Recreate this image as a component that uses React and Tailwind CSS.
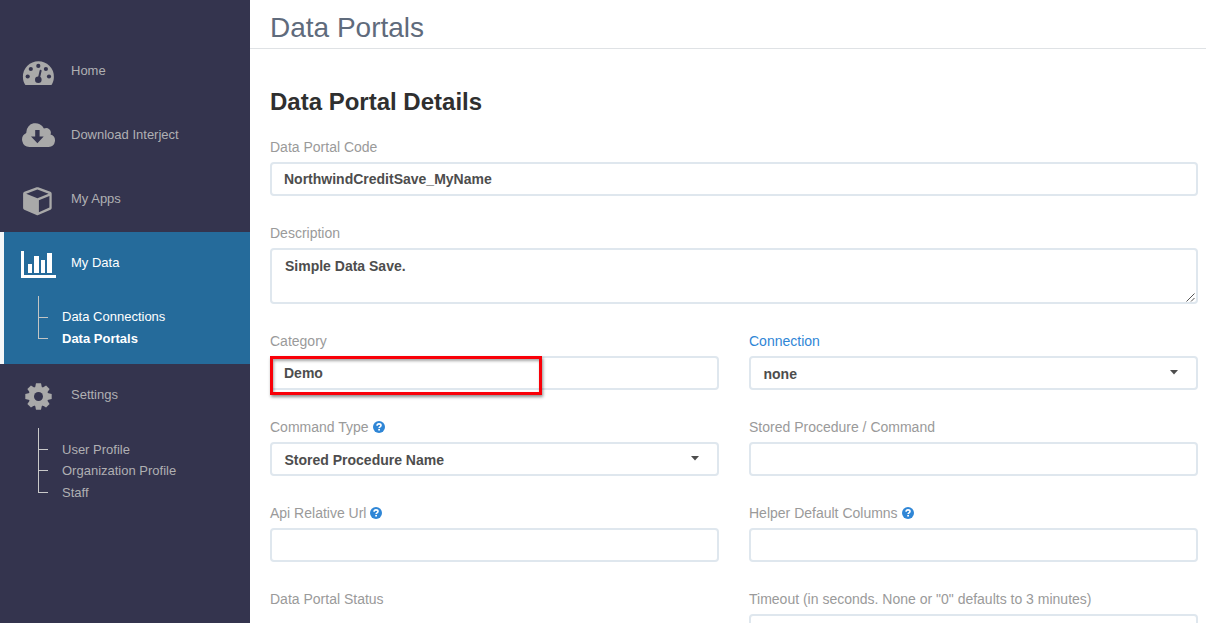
import React from "react";

const GaugeIcon = () => (
  <svg width="33" height="26" viewBox="22 60 33 26" className="block">
    <path fill="#a9a9a9" d="M38.4 61.2A15.5 15.5 0 0 0 22.9 76.7c0 3 .8 5.5 2.1 7.7.3.5.6.7 1.2.7h24.4c.6 0 .9-.2 1.2-.7 1.3-2.2 2.1-4.7 2.1-7.7A15.5 15.5 0 0 0 38.4 61.2z" />
    <g fill="#34344e">
      <circle cx="38.3" cy="65.9" r="2.1" />
      <circle cx="30.8" cy="69" r="2.1" />
      <circle cx="45.9" cy="69" r="2.1" />
      <circle cx="27.7" cy="76.5" r="2.1" />
      <circle cx="49" cy="76.5" r="2.1" />
      <circle cx="38.3" cy="79.8" r="3.3" />
    </g>
    <path d="M38.6 79.5l2-8.7" stroke="#34344e" strokeWidth="2" strokeLinecap="round" />
  </svg>
);

const CloudIcon = () => (
  <svg width="33" height="25" viewBox="22 123 33 25" className="block">
    <path fill="#a9a9a9" d="M29.5 147a7.3 7.3 0 0 1-3.2-13.9v-.9a9.2 9.2 0 0 1 17.6-3.6 4.7 4.7 0 0 1 6.6 5.9A6.4 6.4 0 0 1 48.6 147z" />
    <path fill="#34344e" d="M35.2 130h4.4v6.5h4.1l-6.3 6.7-6.4-6.7h4.2z" />
  </svg>
);

const CubeIcon = () => (
  <svg width="31" height="30" viewBox="22 186 31 30" className="block">
    <path fill="#a9a9a9" fillRule="evenodd" d="M36.600 187.300q.8-.3 1.600 0l12.200 4.500q1.300.5 1.300 1.900v14.200q0 1.300-1.200 1.800l-12.200 5.300q-.9.400-1.800 0l-12.200-5.300q-1.200-.5-1.200-1.800v-14.200q0-1.400 1.300-1.900zM37.400 189.400l-11.200 4.300 11.200 4.500 11.200-4.500zM38.900 200.300v12l10.500-4.700v-11.500z" />
  </svg>
);

const ChartIcon = () => (
  <svg width="35" height="27" viewBox="0 0 35 27" shapeRendering="crispEdges" fill="#fff" className="block">
    <path d="M0 0h3v24h32v3H0zM7 13h4v9H7zM13 5h5v17h-5zM20 9h4v13h-4zM26 2h5v20h-5z" />
  </svg>
);

const GearIcon = () => (
  <svg width="27" height="27" viewBox="-13.500 -13.500 27 27" className="block">
    <g fill="#a9a9a9">
      <circle r="10" />
      <path id="tooth" d="M-3.400-9L-2.500-13.200H2.500L3.400-9V9L2.500 13.200H-2.500L-3.400 9z" />
      <use href="#tooth" transform="rotate(45)" />
      <use href="#tooth" transform="rotate(90)" />
      <use href="#tooth" transform="rotate(135)" />
    </g>
    <circle r="4.500" fill="#34344e" />
  </svg>
);

const HelpIcon = () => (
  <svg width="12" height="12" viewBox="0 0 12 12" className="-mt-px ml-[4px] block">
    <circle cx="6" cy="6" r="6" fill="#2f86d6" />
    <path d="M4.100 4.700C4.100 3.500 4.900 2.900 6 2.900s2 .6 2 1.600c0 1.300-1.900 1.300-1.900 2.600" fill="none" stroke="#fff" strokeWidth="1.600" />
    <rect x="5.200" y="7.900" width="1.800" height="1.600" fill="#fff" />
  </svg>
);

const NavItem = ({ icon, label, pad, active }) => (
  <div className="flex h-16 items-start">
    <div className={"w-[71px] shrink-0 " + pad}>{icon}</div>
    <span className={"pt-[21px] text-[13px] leading-[20px] " + (active ? "text-white" : "text-[#b0b0b3]")}>{label}</span>
  </div>
);

const Field = ({ label, help, link, value, select, textarea, children }) => (
  <div className="relative min-w-0">
    <div className={"flex h-[20px] items-center text-sm leading-[20px] " + (link ? "text-[#2f86d6]" : "text-[#9a9a9a]")}>
      <span>{label}</span>
      {help && <HelpIcon />}
    </div>
    <div
      className={
        "relative mt-[5px] flex justify-between rounded-[4px] border-2 border-[#dfe7ee] bg-white text-sm leading-[20px] font-bold text-[#4d4d4d] " +
        (textarea ? "h-[56px] pt-[6px] pl-[13px]" : select ? "h-[34px] pt-[6px] pl-[12.5px]" : "h-[34px] pt-[5px] pl-[12px]")
      }
    >
      <span>{value}</span>
      {select && (
        <svg width="8" height="5" viewBox="0 0 8 5" className="mt-[6px] mr-[18px]">
          <path d="M0 0h8L4 4.500z" fill="#4d4d4d" />
        </svg>
      )}
      {textarea && (
        <svg width="9" height="9" viewBox="0 0 9 9" className="mt-[37px] mr-px" stroke="#555" strokeWidth="1">
          <path d="M.5 8.500l8-8M5 8.500l3.500-3.500" />
        </svg>
      )}
    </div>
    {children}
  </div>
);

export default function App() {
  return (
    <div className="flex h-[623px] w-[1206px] overflow-hidden bg-white font-['Liberation_Sans',Arial,sans-serif]">
      <aside className="w-[250px] shrink-0 bg-[#34344e] pt-10">
        <NavItem icon={<GaugeIcon />} label="Home" pad="pt-5 pl-[22px]" />
        <NavItem icon={<CloudIcon />} label="Download Interject" pad="pt-[19px] pl-[22px]" />
        <NavItem icon={<CubeIcon />} label="My Apps" pad="pt-[18px] pl-[22px]" />
        <div className="h-[132px] border-l-4 border-[#f5f7f9] bg-[#256b9b]">
          <div className="-ml-1">
            <NavItem icon={<ChartIcon />} label="My Data" pad="pt-[19px] pl-[21px]" active />
          </div>
          <div className="flex text-[13px] leading-[22px] text-white">
            <div className="ml-[34px] w-[10px]">
              <div className="h-[22px] border-b border-l border-[#c3c5c4]" />
              <div className="h-[21px] border-b border-l border-[#c3c5c4]" />
            </div>
            <div className="pt-[10px] pl-[14px]">
              <div>Data Connections</div>
              <div className="font-bold">Data Portals</div>
            </div>
          </div>
        </div>
        <NavItem icon={<GearIcon />} label="Settings" pad="pt-[19px] pl-[25px]" />
        <div className="flex text-[13px] text-[#b0b0b3]">
          <div className="ml-[38px] w-[10px]">
            <div className="h-[22px] border-b border-l border-[#c9c9c9]" />
            <div className="h-[21px] border-b border-l border-[#c9c9c9]" />
            <div className="h-[22px] border-b border-l border-[#c9c9c9]" />
          </div>
          <div className="pt-[12px] pl-[14px]">
            <div className="h-[21px] leading-[20px]">User Profile</div>
            <div className="h-[22px] leading-[20px]">Organization Profile</div>
            <div className="h-[21px] leading-[20px]">Staff</div>
          </div>
        </div>
      </aside>
      <main className="min-w-0 flex-1">
        <header className="h-[49px] border-b border-[#dfe2e5] pt-[12px] pl-5">
          <h1 className="text-[28px] leading-[32px] text-[#5f6b7c]">Data Portals</h1>
        </header>
        <section className="pr-2 pl-5">
          <h2 className="pt-[39px] text-[24px] leading-[28px] font-bold text-[#2f2f2f]">Data Portal Details</h2>
          <div className="mt-[21px] flex flex-col gap-[27px]">
            <Field label="Data Portal Code" value="NorthwindCreditSave_MyName" />
            <Field label="Description" value="Simple Data Save." textarea />
            <div className="grid grid-cols-2 gap-x-[30px] gap-y-[27px]">
              <Field label="Category" value="Demo">
                <div className="absolute top-[25px] left-0 h-[39px] w-[272px] border-3 border-[#f90008] shadow-[1px_2px_3px_rgba(0,0,0,0.45),inset_1px_2px_3px_rgba(0,0,0,0.35)]" />
              </Field>
              <Field label="Connection" value="none" link select />
              <Field label="Command Type" value="Stored Procedure Name" help select />
              <Field label="Stored Procedure / Command" />
              <Field label="Api Relative Url" help />
              <Field label="Helper Default Columns" help />
              <div className="text-sm leading-[20px] text-[#9a9a9a]">Data Portal Status</div>
              <Field label={'Timeout (in seconds. None or "0" defaults to 3 minutes)'} />
            </div>
          </div>
        </section>
      </main>
    </div>
  );
}
